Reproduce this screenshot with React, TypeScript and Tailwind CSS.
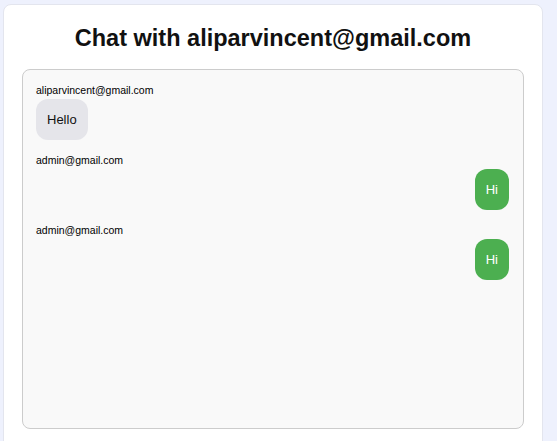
type Message = {
  id: number;
  sender: string;
  text: string;
  mine: boolean;
};

const messages: Message[] = [
  { id: 1, sender: 'aliparvincent@gmail.com', text: 'Hello', mine: false },
  { id: 2, sender: 'admin@gmail.com', text: 'Hi', mine: true },
  { id: 3, sender: 'admin@gmail.com', text: 'Hi', mine: true },
];

function MessageRow({ message }: { message: Message }) {
  return (
    <div className="mb-[12px] flex flex-col">
      <span className="text-[10.5px] leading-[17px] text-black">{message.sender}</span>
      <div className={message.mine ? 'flex justify-end' : 'flex justify-start'}>
        <span
          className={
            message.mine
              ? 'rounded-[12px] bg-[#4caf50] px-[11px] py-[12px] text-[13px] leading-[17px] text-white'
              : 'rounded-[12px] bg-[#e5e5ea] px-[11px] py-[12px] text-[13px] leading-[17px] text-[#111]'
          }
        >
          {message.text}
        </span>
      </div>
    </div>
  );
}

export default function App() {
  return (
    <div
      className="min-h-[441px] w-full overflow-hidden bg-[#eef1fd] pt-[4px]"
      style={{ fontFamily: '"Liberation Sans", Arial, sans-serif' }}
    >
      <div className="ml-[3px] w-[540px] rounded-[8px] border border-[#e3e5ee] bg-white px-[18px] pb-[20px] pt-[20px]">
        <h2 className="mb-[18px] text-center text-[23.5px] font-bold leading-[26px] text-[#111]">
          Chat with aliparvincent@gmail.com
        </h2>
        <div className="h-[360px] overflow-y-auto rounded-[8px] border border-[#cccccc] bg-[#f9f9f9] pl-[13px] pr-[14px] pt-[12px]">
          {messages.map((message) => (
            <MessageRow key={message.id} message={message} />
          ))}
        </div>
      </div>
    </div>
  );
}
